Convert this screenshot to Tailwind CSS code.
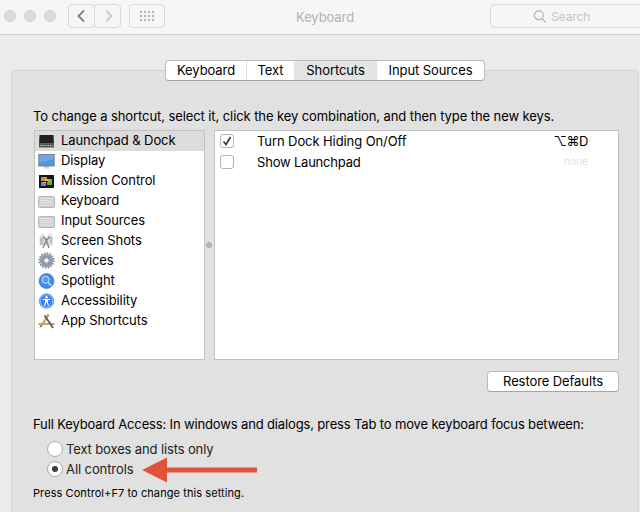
<!DOCTYPE html>
<html lang="en">
<head>
<meta charset="utf-8">
<title>Keyboard</title>
<script src="https://cdn.jsdelivr.net/npm/@tailwindcss/browser@4"></script>
</head>
<body class="w-[640px] h-[512px] overflow-hidden bg-[#ebebeb] font-['Inter',sans-serif] text-[13px] leading-5 tracking-[-0.09px] text-black">
<div class="w-[640px] h-[512px] overflow-hidden flex flex-col">
  <header class="relative h-[35px] shrink-0 bg-[#f6f6f6] border-b border-[#cfcfcf] flex items-start pt-1 pl-1">
    <div class="flex gap-2 pt-1.5">
      <span class="size-3 rounded-full bg-[#dcdcdc] border border-[#cbcbcb]"></span>
      <span class="size-3 rounded-full bg-[#dcdcdc] border border-[#cbcbcb]"></span>
      <span class="size-3 rounded-full bg-[#dcdcdc] border border-[#cbcbcb]"></span>
    </div>
    <div class="ml-3 flex">
      <button class="w-[27px] h-6 border border-[#d9d9d9] rounded-[4px] flex items-center justify-center"><svg width="10" height="14" viewBox="0 0 10 14" fill="none" stroke="#7f7f7f" stroke-width="1.8"><path d="M7 1.500 1.500 7 7 12.500"/></svg></button>
      <button class="-ml-px w-[27px] h-6 border border-[#d9d9d9] rounded-[4px] flex items-center justify-center"><svg width="10" height="14" viewBox="0 0 10 14" fill="none" stroke="#c2c2c2" stroke-width="1.6"><path d="M3 1.500 8.500 7 3 12.500"/></svg></button>
    </div>
    <button class="ml-2 w-9 h-6 border border-[#d9d9d9] rounded-[4px] flex items-center justify-center">
      <svg width="14" height="10" viewBox="0 0 14 10" stroke="#b3b3b3" stroke-width="2" stroke-dasharray="2 2"><path d="M0 1h14M0 5h14M0 9h14"/></svg>
    </button>
    <h1 class="ml-[131px] pt-[3px] text-[#b1b1b1]">Keyboard</h1>
    <div class="absolute left-[490px] top-1 w-[170px] h-6 border border-[#d9d9d9] rounded-[4px] flex items-center pl-[42px] text-[#c4c4c4] text-[12px]">
      <svg class="mr-[5px]" width="13" height="13" viewBox="0 0 13 13" fill="none" stroke="#b2b2b2" stroke-width="1.2"><circle cx="5.800" cy="5.300" r="4.500"/><path d="m9 8.700 3.600 3.600"/></svg><span class="pt-px">Search</span>
    </div>
  </header>
  <main class="mt-[35px] ml-[11px] w-[628px] h-[460px] shrink-0 bg-[#e1e1e1] border border-b-0 border-[#d3d3d3] border-x-[#d9d9d9] rounded-t-[4px] pl-[21px]">
    <nav class="-mt-[11px] ml-[132px] w-[320px] h-[21px] leading-[19px] flex bg-white rounded-[4px] border border-[#bdbdbd] border-b-[#a5a5a5] overflow-hidden text-center">
      <span class="w-[81px] border-r border-[#dcdcdc]">Keyboard</span>
      <span class="w-[47px]">Text</span>
      <span class="w-[83px] bg-[#e4e4e4]">Shortcuts</span>
      <span class="flex-1">Input Sources</span>
    </nav>
    <p class="mt-[25px] whitespace-nowrap"><span>To change a shortcut, select it, click the key combination, and then type the new keys.</span></p>
    <div class="mt-1 ml-px flex items-center h-[230px]">
      <ul class="w-[171px] h-[230px] bg-white border border-[#c2c2c2] leading-[18px] [&_span]:pb-[2px] [&_svg]:mb-px">
        <li class="h-5 flex items-center gap-[6px] pl-[3px] bg-[#dcdcdc]">
          <svg width="17" height="16" viewBox="0 0 17 16"><path d="M1.500 2h14l.5 9H1z" fill="#202020"/><path d="M1 11h15v3.500H1z" fill="#555"/><path d="M1 10.500h15" stroke="#777" stroke-width=".7"/><path d="M2 12.500h13" stroke="#bbb" stroke-dasharray="1.500 1"/></svg><span>Launchpad &amp; Dock</span></li>
        <li class="h-5 flex items-center gap-[6px] pl-[3px]">
          <svg width="17" height="16" viewBox="0 0 17 16"><path d="M6.500 12h4l.7 3.500H5.800z" fill="#d0d0d0"/><rect x=".8" y="1.500" width="15.400" height="11.500" fill="#5795dc" stroke="#737b86" stroke-width=".9"/><path d="M1.500 2h14v4l-14 4z" fill="#70a5e7"/></svg><span>Display</span></li>
        <li class="h-5 flex items-center gap-[6px] pl-[3px]">
          <svg width="17" height="16" viewBox="0 0 17 16"><rect x="1" y="2" width="15" height="13" fill="#171717"/><path d="M3 4h6v4H3z" fill="#d88b45"/><path d="M10 6h4v5h-4z" fill="#76bd31"/><path d="M3 9h5v4H3z" fill="#508cf0"/><path d="M9 9h5v3H9z" fill="#67ad31"/><path d="M7 6h4v2H7zM5 9h3v1H5z" fill="#e5ad63"/></svg><span>Mission Control</span></li>
        <li class="h-5 flex items-center gap-[6px] pl-[3px]">
          <svg width="17" height="16" viewBox="0 0 17 16"><rect x=".5" y="3.500" width="16" height="11" rx="1" fill="#d0d0d0" stroke="#b6b6b6"/><path d="M2 5.500h13M2.500 7.500h12M2 9.500h13M2 12h13" stroke="#ededed" stroke-dasharray="1.400 .6"/></svg><span>Keyboard</span></li>
        <li class="h-5 flex items-center gap-[6px] pl-[3px]">
          <svg width="17" height="16" viewBox="0 0 17 16"><rect x=".5" y="3.500" width="16" height="11" rx="1" fill="#d0d0d0" stroke="#b6b6b6"/><path d="M2 5.500h13M2.500 7.500h12M2 9.500h13M2 12h13" stroke="#ededed" stroke-dasharray="1.400 .6"/></svg><span>Input Sources</span></li>
        <li class="h-5 flex items-center gap-[6px] pl-[3px]">
          <svg width="17" height="16" viewBox="0 0 17 16" fill="none"><path d="M1.500 3.500h13.500v9H1.500z" fill="#dfdfdf"/><path d="M2 5h3v7H2zM12 4h2v6h-2z" fill="#bcbcbc"/><circle cx="4.500" cy="2.500" r="1.500" stroke="#ccc"/><circle cx="12" cy="2.500" r="1.500" stroke="#ccc"/><path d="m5 3.500 3.500 4 2.500 7.500M12 3.500 8 8l-3 7" stroke="#8c8c8c" stroke-width="1.500"/></svg><span>Screen Shots</span></li>
        <li class="h-5 flex items-center gap-[6px] pl-[3px]">
          <svg width="17" height="17" viewBox="0 0 17 17" fill="none"><circle cx="8.500" cy="8.500" r="7.200" stroke="#7c8494" stroke-width="1.800" stroke-dasharray="1.500 1.328"/><circle cx="8.500" cy="8.500" r="4.800" stroke="#8b93a4" stroke-width="3.600"/><circle cx="8.500" cy="8.500" r="5.300" stroke="#adb3bf" stroke-width=".8"/><circle cx="8.500" cy="8.500" r="2.700" fill="#f4f4f4" stroke="#6b7280" stroke-width=".8"/></svg><span>Services</span></li>
        <li class="h-5 flex items-center gap-[6px] pl-[3px]">
          <svg width="17" height="16" viewBox="0 0 17 16" fill="none"><circle cx="8.500" cy="8" r="7.500" fill="#4289f7" stroke="#2f70d6" stroke-width=".6"/><circle cx="7.600" cy="6.800" r="3.500" fill="#559af9" stroke="#d2e4ff" stroke-width="1"/><path d="m10.200 9.500 3 3.200" stroke="#d2e4ff" stroke-width="1.300"/></svg><span>Spotlight</span></li>
        <li class="h-5 flex items-center gap-[6px] pl-[3px]">
          <svg width="17" height="16" viewBox="0 0 17 16" fill="none"><circle cx="8.500" cy="8" r="7.200" fill="#3983ef" stroke="#5c92dc" stroke-width=".8"/><circle cx="8.500" cy="8" r="6.200" stroke="#9cc7ff" stroke-width=".8"/><circle cx="8.500" cy="4.200" r="1.200" fill="#fff"/><path d="M4.700 6.500h7.600M8.500 6.500v3M7.600 7v2.700l-1.200 3M9.400 7v2.700l1.200 3" stroke="#fff" stroke-width="1.100"/></svg><span>Accessibility</span></li>
        <li class="h-5 flex items-center gap-[6px] pl-[3px]">
          <svg width="17" height="16" viewBox="0 0 17 16" fill="none"><path d="M.5 11h16" stroke="#c9a07a" stroke-width="2"/><path d="m10 2.500-7 11" stroke="#d69a3d" stroke-width="2"/><path d="m6.500 2.500 7 10 1.500 2.500" stroke="#625f65" stroke-width="2"/><path d="m2.500 12-1 3 2-1.500" fill="#73624d"/><path d="m9.500 3 1-1.500" stroke="#b66b55" stroke-width="2"/></svg><span>App Shortcuts</span></li>
      </ul>
      <span class="ml-[1px] mr-[2px] size-[6px] rounded-full bg-[#b6b6b6] border border-[#a9a9a9]"></span>
      <div class="w-[405px] h-[230px] bg-white border border-[#c2c2c2]">
        <div class="h-[21px] flex items-center pl-[5px] pr-[30px]">
          <span class="mb-px size-[14px] rounded-[3px] border border-[#b4b4b4] flex items-center justify-center"><svg width="10" height="10" viewBox="0 0 10 10" fill="none" stroke="#3c3c3c" stroke-width="1.700"><path d="m1.500 5.500 2.500 3 4.500-7.500"/></svg></span>
          <span class="ml-[23px] pb-px">Turn Dock Hiding On/Off</span><span class="ml-auto pb-px tracking-[-0.4px]">⌥⌘D</span>
        </div>
        <div class="h-[21px] flex items-center pl-[5px] pr-[30px]">
          <span class="mb-px size-[14px] rounded-[3px] border border-[#b4b4b4]"></span>
          <span class="ml-[23px] pb-px tracking-[-0.2px]">Show Launchpad</span><span class="ml-auto pb-[3px] text-[10px] tracking-[0.1px] text-[#dfdfdf]">none</span>
        </div>
      </div>
    </div>
    <button class="block mt-[11px] ml-[454px] w-[132px] h-[21px] leading-[19px] bg-white border border-[#bdbdbd] border-b-[#a5a5a5] rounded-[4px]"><span>Restore Defaults</span></button>
    <p class="mt-[22px] whitespace-nowrap tracking-[-0.145px]"><span>Full Keyboard Access: In windows and dialogs, press Tab to move keyboard focus between:</span></p>
    <div class="mt-[5px] ml-[14px] text-[#222]">
      <div class="h-5 flex items-center gap-[3px] tracking-[-0.13px]"><span class="size-4 rounded-full bg-white border border-[#adadad]"></span><span>Text boxes and lists only</span></div>
      <div class="h-5 flex items-center gap-[3px]"><span class="size-4 rounded-full bg-white border border-[#adadad] flex items-center justify-center"><span class="size-[6px] rounded-full bg-[#3a3a3a]"></span></span><span>All controls</span>
        <svg class="ml-[6px] mt-[2px]" width="116" height="26" viewBox="0 0 116 26" fill="#e0533a"><path d="M0 13 25 .5v10h90v5H25v10z"/></svg></div>
    </div>
    <p class="mt-1 text-[11px] tracking-[0.08px] whitespace-nowrap"><span>Press Control+F7 to change this setting.</span></p>
  </main>
</div>
</body>
</html>
